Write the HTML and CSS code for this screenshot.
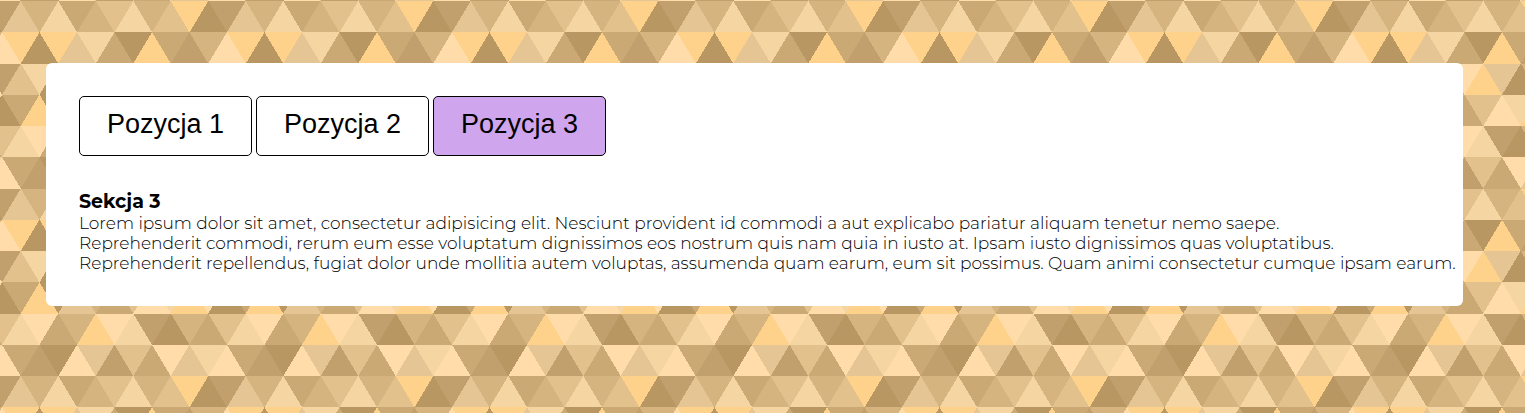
FILE: index.html
```
<!DOCTYPE html>
<html lang="pl">
<head>
<meta charset="utf-8">
<title>Sekcja 3</title>
<link rel="stylesheet" href="styles.css">
</head>
<body>
<main class="card">
  <nav class="tabs">
    <button class="tab" type="button">Pozycja 1</button>
    <button class="tab" type="button">Pozycja 2</button>
    <button class="tab tab-active" type="button">Pozycja 3</button>
  </nav>
  <section class="section">
    <h2 class="section-title">Sekcja 3</h2>
    <p class="section-text">Lorem ipsum dolor sit amet, consectetur adipisicing elit. Nesciunt provident id commodi a aut explicabo pariatur aliquam tenetur nemo saepe.<br>Reprehenderit commodi, rerum eum esse voluptatum dignissimos eos nostrum quis nam quia in iusto at. Ipsam iusto dignissimos quas voluptatibus.<br>Reprehenderit repellendus, fugiat dolor unde mollitia autem voluptas, assumenda quam earum, eum sit possimus. Quam animi consectetur cumque ipsam earum.</p>
  </section>
</main>
<script src="pattern.js"></script>
</body>
</html>
```
FILE: styles.css
```
* {
  box-sizing: border-box;
  margin: 0;
  padding: 0;
}

body {
  padding: 63px 62px 63px 46px;
  background-color: #d5b47f;
  background-position: 2px 1px;
  font-family: Montserrat, Inter, sans-serif;
  color: #000;
}

.card {
  padding: 33px 6px 33px 33px;
  border-radius: 6px;
  background: #fff;
}

.tabs {
  display: flex;
  gap: 4px;
}

.tab {
  width: 173px;
  height: 60px;
  padding-bottom: 3px;
  border: 1px solid #000;
  border-radius: 5px;
  background: #fff;
  color: #000;
  font-family: Arial, "Liberation Sans", sans-serif;
  font-size: 27px;
}

.tab-active {
  background: #cfa6ee;
}

.section {
  margin-top: 34px;
}

.section-title {
  font-size: 19px;
  line-height: 23px;
  font-weight: 700;
}

.section-text {
  font-size: 17px;
  line-height: 20px;
  font-weight: 300;
}
```
FILE: pattern.js
```
// Triangle mosaic: one letter per triangle, one string per row.
const colors = {
  Y: '#ffd28c', L: '#ffdcaa', P: '#f5d5a1', Q: '#e6c594', M: '#e2c18d',
  N: '#d5b47f', O: '#caa975', D: '#c1a06d', B: '#b89762'
};
const rows = [
  'DQNPONMPNMYB',
  'LYBYQPOBYODN',
  'DMPBONLYQBNL',
  'BOYBQNOMLPYL',
  'MPLONYLPDBNO',
  'LODBLQDMOLQP'
];
let shapes = '';
for (let r = 0; r < 12; r++) {
  const row = rows[r % 6];
  for (let i = 0; i <= 12; i++) {
    const points = (i + r) % 2
      ? `${i},${r} ${i + 1},${r + 1} ${i - 1},${r + 1}`
      : `${i - 1},${r} ${i + 1},${r} ${i},${r + 1}`;
    shapes += `<polygon points="${points}" fill="${colors[row[i % 12]]}"/>`;
  }
}
const svg = `<svg xmlns="http://www.w3.org/2000/svg" width="225" height="375" viewBox="0 0 12 12" preserveAspectRatio="none" shape-rendering="crispEdges">${shapes}</svg>`;
document.body.style.backgroundImage = `url("data:image/svg+xml,${encodeURIComponent(svg)}")`;
```
